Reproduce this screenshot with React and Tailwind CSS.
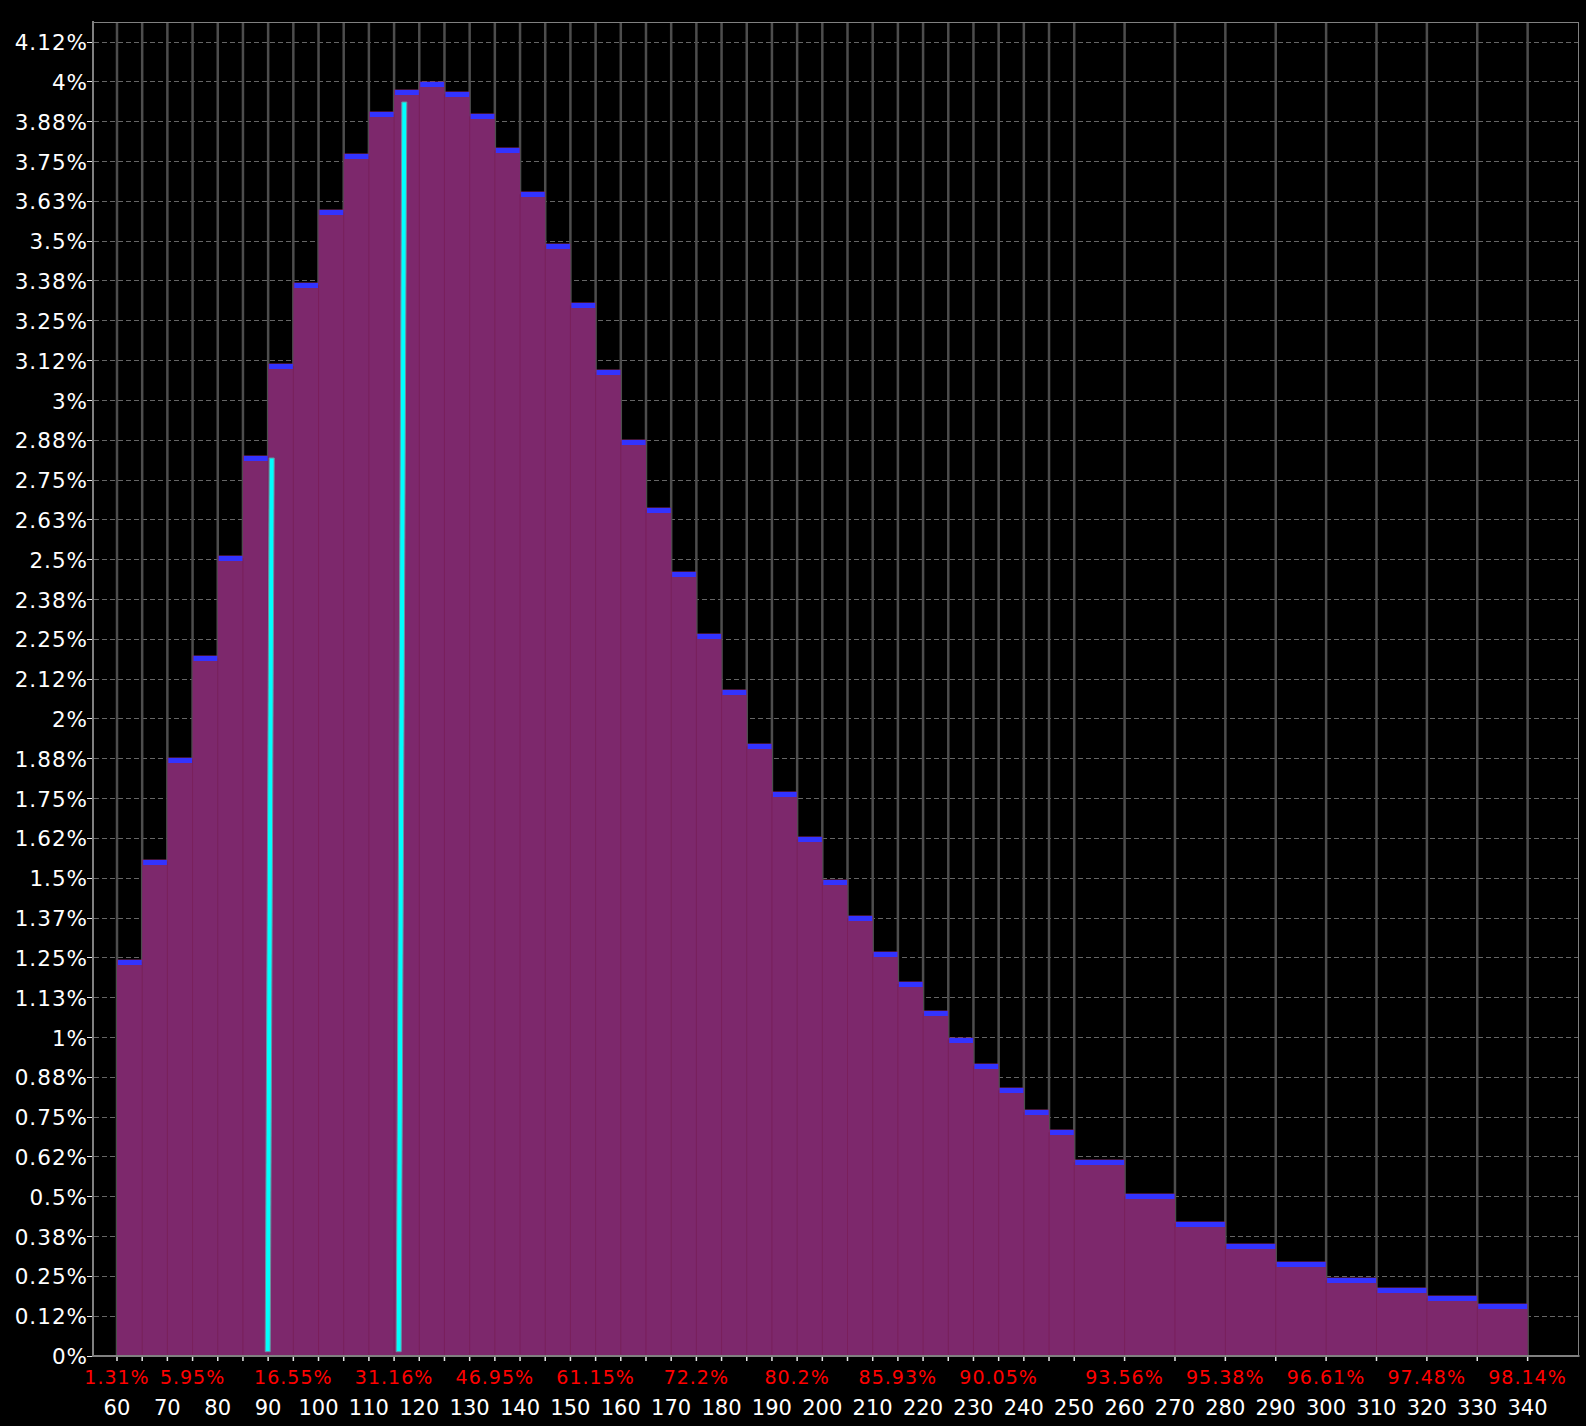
const yLabels = ["4.12%", "4%", "3.88%", "3.75%", "3.63%", "3.5%", "3.38%", "3.25%", "3.12%", "3%", "2.88%", "2.75%", "2.63%", "2.5%", "2.38%", "2.25%", "2.12%", "2%", "1.88%", "1.75%", "1.62%", "1.5%", "1.37%", "1.25%", "1.13%", "1%", "0.88%", "0.75%", "0.62%", "0.5%", "0.38%", "0.25%", "0.12%", "0%"];

const redLabels = [
  { at: 0, text: "1.31%" },
  { at: 3, text: "5.95%" },
  { at: 7, text: "16.55%" },
  { at: 11, text: "31.16%" },
  { at: 15, text: "46.95%" },
  { at: 19, text: "61.15%" },
  { at: 23, text: "72.2%" },
  { at: 27, text: "80.2%" },
  { at: 31, text: "85.93%" },
  { at: 35, text: "90.05%" },
  { at: 40, text: "93.56%" },
  { at: 44, text: "95.38%" },
  { at: 48, text: "96.61%" },
  { at: 52, text: "97.48%" },
  { at: 56, text: "98.14%" },
];

const xLabels = [60, 70, 80, 90, 100, 110, 120, 130, 140, 150, 160, 170, 180, 190, 200, 210, 220, 230, 240, 250, 260, 270, 280, 290, 300, 310, 320, 330, 340];

// centre of the blue cap of each bin, narrow bins first
const narrow = [961.7, 861.6, 759.5, 658.4, 558.2, 458.3, 366.1, 285.2, 212.4, 156.3, 114.3, 92.3, 84.3, 94.3, 116.3, 150.3, 194.2, 245.7, 305.4, 372.2, 441.9, 509.7, 574.4, 636.1, 691.7, 746.3, 793.9, 839.4, 881.9, 918.3, 953.6, 984, 1013.3, 1039.6, 1065.9, 1090.3, 1112.3, 1132.3];
const wide = [1162.3, 1196.3, 1223.6, 1245.9, 1264.3, 1280.3, 1290.3, 1298.3, 1306.3];

const UNIT = 25.19;
const X0 = 117;
const BASE = 1355.6;
const ROW = 39.82;
const xAt = (i) => X0 + i * UNIT;

const bins = [
  ...narrow.map((y, i) => ({ from: i, to: i + 1, y })),
  ...wide.map((y, i) => ({ from: 38 + i * 2, to: 40 + i * 2, y })),
];
const edges = [...bins.map((b) => b.from), 56];

function Plot() {
  return (
    <svg width="1500" height="1346" viewBox="86 20 1500 1346" className="block shrink-0">
      {yLabels.map((_, i) => {
        const y = Math.round(41.5 + i * ROW) + 0.5;
        return (
          <g key={i}>
            <line x1="87" x2="93" y1={y} y2={y} stroke="#e8e8e8" strokeWidth="1" />
            {i < yLabels.length - 1 && (
              <line x1="94" x2="1578" y1={y} y2={y} stroke="#666666" strokeWidth="1" strokeDasharray="5 3" />
            )}
          </g>
        );
      })}

      {edges.map((i) => (
        <line key={i} x1={xAt(i)} x2={xAt(i)} y1="23" y2={BASE} stroke="#4d4d4d" strokeWidth="2.5" />
      ))}

      {bins.map((b) => (
        <rect key={b.from} x={xAt(b.from)} y={Math.round(b.y) - 2.5} width={xAt(b.to) - xAt(b.from)} height={BASE - Math.round(b.y) + 2.5} fill="#7d286c" />
      ))}
      {edges.slice(1, -1).map((i) => {
        const top = bins.find((b) => b.from === i).y;
        const prev = bins.find((b) => b.to === i).y;
        return <line key={i} x1={xAt(i)} x2={xAt(i)} y1={Math.max(top, prev)} y2={BASE} stroke="#7a1f5c" strokeWidth="1" />;
      })}
      {bins.map((b) => (
        <rect key={b.from} x={xAt(b.from) + 1} y={Math.round(b.y) - 2} width={xAt(b.to) - xAt(b.from) - 1.5} height="5" fill="#3333ff" />
      ))}

      <polygon points="269.2,458 274.2,458 270.2,1351.7 265.2,1351.7" fill="#00ffff" stroke="#6f8f9f" strokeWidth="1" />
      <polygon points="401.8,102 406.8,102 401.2,1351.7 396.2,1351.7" fill="#00ffff" stroke="#6f8f9f" strokeWidth="1" />

      <line x1="92" x2="1579" y1="22.5" y2="22.5" stroke="#808080" strokeWidth="1" />
      <line x1="1578.5" x2="1578.5" y1="22" y2="1356" stroke="#808080" strokeWidth="1" />
      <line x1="93" x2="93" y1="21" y2="1357" stroke="#808080" strokeWidth="2" />
      <line x1="92" x2="1579.5" y1="1356" y2="1356" stroke="#808080" strokeWidth="2" />

      {edges.map((i) => (
        <line key={i} x1={xAt(i)} x2={xAt(i)} y1="1357" y2="1361" stroke="#e8e8e8" strokeWidth="1.5" />
      ))}
    </svg>
  );
}

export default function App() {
  return (
    <div className="w-[1586px] h-[1426px] bg-black overflow-hidden font-['DejaVu_Sans',sans-serif]">
      <div className="flex h-[1366px]">
        <div className="w-[86px] shrink-0 pt-[23.2px] text-white text-[21.5px] tracking-[1px] text-right">
          {yLabels.map((label) => (
            <div key={label} className="h-[39.82px] leading-[39.82px] whitespace-nowrap -mr-[2px]">
              {label}
            </div>
          ))}
        </div>
        <div className="pt-[20px]">
          <Plot />
        </div>
      </div>

      <div className="grid grid-cols-[repeat(57,25.19px)] pl-[104.4px] h-[24px] text-[#ff0000] text-[19px] tracking-[1px] leading-[22px]">
        {redLabels.map((l) => (
          <div key={l.at} className="row-start-1 flex justify-center whitespace-nowrap" style={{ gridColumnStart: l.at + 1 }}>
            {l.text}
          </div>
        ))}
      </div>

      <div className="flex pl-[91.8px] pt-[5px] text-white text-[21px] leading-[26px]">
        {xLabels.map((n) => (
          <div key={n} className="w-[50.38px] shrink-0 text-center">
            {n}
          </div>
        ))}
      </div>
    </div>
  );
}
